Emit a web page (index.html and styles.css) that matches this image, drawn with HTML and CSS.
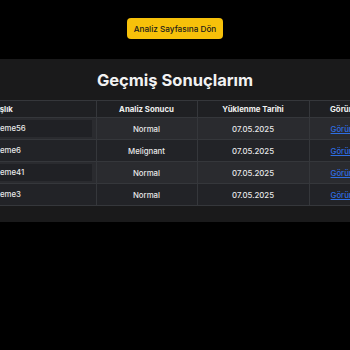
FILE: index.html
```html
<!DOCTYPE html>
<html lang="tr">
<head>
<meta charset="utf-8">
<title>Geçmiş Sonuçlarım</title>
<link rel="stylesheet" href="styles.css">
</head>
<body>
<div class="top">
  <button class="back-btn">Analiz Sayfasına Dön</button>
</div>
<section class="panel">
  <h2 class="title">Geçmiş Sonuçlarım</h2>
  <div class="table-wrap">
    <table class="results">
      <thead>
        <tr>
          <th class="c-title">Başlık</th>
          <th class="c-result">Analiz Sonucu</th>
          <th class="c-date">Yüklenme Tarihi</th>
          <th class="c-view">Görüntüle</th>
        </tr>
      </thead>
      <tbody>
        <tr class="odd">
          <td class="c-title"><span class="name">Deneme56</span></td>
          <td>Normal</td>
          <td>07.05.2025</td>
          <td><a href="#">Görüntüle</a></td>
        </tr>
        <tr class="even">
          <td class="c-title"><span class="name">Deneme6</span></td>
          <td>Melignant</td>
          <td>07.05.2025</td>
          <td><a href="#">Görüntüle</a></td>
        </tr>
        <tr class="odd">
          <td class="c-title"><span class="name">Deneme41</span></td>
          <td>Normal</td>
          <td>07.05.2025</td>
          <td><a href="#">Görüntüle</a></td>
        </tr>
        <tr class="even">
          <td class="c-title"><span class="name">Deneme3</span></td>
          <td>Normal</td>
          <td>07.05.2025</td>
          <td><a href="#">Görüntüle</a></td>
        </tr>
      </tbody>
    </table>
  </div>
</section>
</body>
</html>
```

FILE: styles.css
```css
html, body {
  margin: 0;
  padding: 0;
  background: #000;
  font-family: Inter, "Noto Sans", sans-serif;
  color: #e9e9ea;
}

.top {
  display: flex;
  justify-content: center;
  padding-top: 18px;
}

.back-btn {
  height: 21px;
  padding: 0 7px;
  border: none;
  border-radius: 4px;
  background: #f7c10a;
  color: #1a1a1a;
  font-family: Inter, sans-serif;
  font-size: 8.2px;
  font-weight: 500;
}

.panel {
  margin-top: 20px;
  background: #1a1a1b;
  padding: 8px 0 16px;
  overflow: hidden;
}

.title {
  margin: 0;
  height: 33px;
  text-align: center;
  font-size: 16.5px;
  font-weight: 700;
  line-height: 26px;
  color: #f2f2f2;
}

.table-wrap {
  display: flex;
}

.results {
  margin-left: -18px;
  border-collapse: collapse;
  flex: none;
  font-size: 7.8px;
  font-weight: 500;
  table-layout: fixed;
  width: 407px;
}

.results th,
.results td {
  box-sizing: border-box;
  border: 1px solid #35373b;
  text-align: center;
  padding: 0 8px;
}

.results tr > :first-child { border-left: none; }

.results th {
  height: 17px;
  background: #1f2023;
  font-weight: 700;
  color: #f0f0f0;
}

.results td {
  height: 22px;
}

.c-title { width: 114px; text-align: left !important; }
.c-result { width: 101px; }
.c-date { width: 112px; }
.c-view { width: 80px; }

.results td.c-title {
  padding: 0 4px 0 0;
}

.name {
  display: block;
  height: 17px;
  line-height: 17px;
  padding-left: 3px;
}

.odd { background: #2a2b2f; }
.even { background: #222327; }

.odd .name { background: #202125; }

.results a {
  color: #2f6fe4;
  text-decoration: underline;
}
```
